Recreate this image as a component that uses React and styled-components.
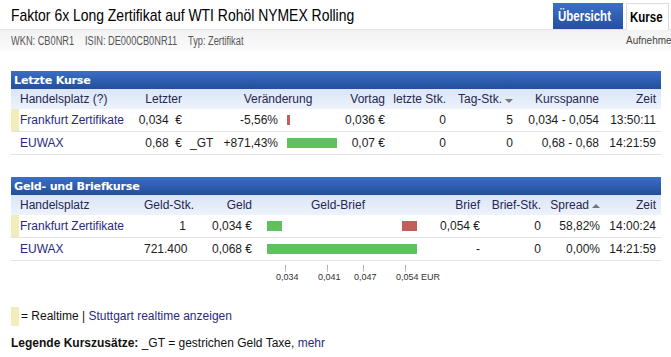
import styled, { createGlobalStyle } from 'styled-components';

const GlobalStyle = createGlobalStyle`
    html, body {
        margin: 0;
        padding: 0;
        background: #fff;
        overflow: hidden;
    }
    body {
        font-family: "Liberation Sans", Arial, sans-serif;
        font-size: 12px;
        color: #1a1a1a;
    }
`;

const colors = {
    link: '#2a2a7c',
    text: '#1c1c1c',
    head: '#262650',
    realtime: '#f2eebb',
    green: '#5ec15e',
    red: '#c35f5a',
    border: '#e3e3e3',
};

// no narrow face installed: squeeze the regular one to Arial Narrow widths
const narrow = (scale = 0.82) => `
    font-family: "Liberation Sans Narrow", "Arial Narrow", "Liberation Sans", sans-serif;
    display: inline-block;
    transform: scaleX(${scale});
    transform-origin: left center;
    white-space: nowrap;
`;

const lastPrices = [
    {
        place: 'Frankfurt Zertifikate',
        realtime: true,
        last: '0,034',
        suffix: '',
        change: '-5,56%',
        bar: { color: colors.red, width: 3 },
        prev: '0,036 €',
        lastQty: '0',
        dayQty: '5',
        range: '0,034 - 0,054',
        time: '13:50:11',
    },
    {
        place: 'EUWAX',
        realtime: false,
        last: '0,68',
        suffix: '_GT',
        change: '+871,43%',
        bar: { color: colors.green, width: 50 },
        prev: '0,07 €',
        lastQty: '0',
        dayQty: '0',
        range: '0,68 - 0,68',
        time: '14:21:59',
    },
];

const bidAsk = [
    {
        place: 'Frankfurt Zertifikate',
        realtime: true,
        bidQty: '1',
        bid: '0,034 €',
        bidBar: 15,
        askBar: 15,
        ask: '0,054 €',
        askQty: '0',
        spread: '58,82%',
        time: '14:00:24',
    },
    {
        place: 'EUWAX',
        realtime: false,
        bidQty: '721.400',
        bid: '0,068 €',
        bidBar: 150,
        askBar: 0,
        ask: '-',
        askQty: '0',
        spread: '0,00%',
        time: '14:21:59',
    },
];

const axis = { min: 0.034, max: 0.054, start: 18, span: 120 };
const axisTicks = [
    { value: 0.034, label: '0,034' },
    { value: 0.041, label: '0,041' },
    { value: 0.047, label: '0,047' },
    { value: 0.054, label: '0,054 EUR' },
];

export default function App() {
    return (
        <Page>
            <GlobalStyle />
            <TopRow>
                <Title>Faktor 6x Long Zertifikat auf WTI Rohöl NYMEX Rolling</Title>
                <Tabs>
                    <Tab $active $w={70} $pad={5}>
                        <TabLabel>Übersicht</TabLabel>
                    </Tab>
                    <Tab $w={43} $pad={3}>
                        <TabLabel>Kurse</TabLabel>
                    </Tab>
                </Tabs>
            </TopRow>
            <InfoBar>
                <InfoItems>
                    <span>WKN: CB0NR1</span>
                    <span>ISIN: DE000CB0NR11</span>
                    <span>Typ: Zertifikat</span>
                </InfoItems>
                <Watch>Aufnehmen</Watch>
            </InfoBar>

            <Section>
                <SectionTitle>Letzte Kurse</SectionTitle>
                <Table>
                    <colgroup>
                        <Col $w={114} />
                        <Col $w={61} />
                        <Col $w={30} />
                        <Col $w={124} />
                        <Col $w={49} />
                        <Col $w={61} />
                        <Col $w={67} />
                        <Col $w={86} />
                        <Col $w={58} />
                    </colgroup>
                    <thead>
                        <tr>
                            <Th $first>Handelsplatz (?)</Th>
                            <Th $align="right">Letzter</Th>
                            <Th />
                            <Th $align="center">Veränderung</Th>
                            <Th $align="right">Vortag</Th>
                            <Th $align="right">letzte Stk.</Th>
                            <Th $align="right">
                                Tag-Stk.<SortArrow $dir="down" />
                            </Th>
                            <Th $align="right">Kursspanne</Th>
                            <Th $align="right" $last>Zeit</Th>
                        </tr>
                    </thead>
                    <tbody>
                        {lastPrices.map((r) => (
                            <tr key={r.place}>
                                <Td $first $realtime={r.realtime}>
                                    <Link>{r.place}</Link>
                                </Td>
                                <Td $align="right">{r.last}&nbsp; €</Td>
                                <Td>{r.suffix}</Td>
                                <Td $flush>
                                    <ChangeCell>
                                        <ChangeValue>{r.change}</ChangeValue>
                                        <Bar $color={r.bar.color} style={{ width: r.bar.width }} />
                                    </ChangeCell>
                                </Td>
                                <Td $align="right">{r.prev}</Td>
                                <Td $align="right">{r.lastQty}</Td>
                                <Td $align="right">{r.dayQty}</Td>
                                <Td $align="right">{r.range}</Td>
                                <Td $align="right" $last>{r.time}</Td>
                            </tr>
                        ))}
                    </tbody>
                </Table>
            </Section>

            <Section $gap={22}>
                <SectionTitle>Geld- und Briefkurse</SectionTitle>
                <Table>
                    <colgroup>
                        <Col $w={129} />
                        <Col $w={50} />
                        <Col $w={66} />
                        <Col $w={164} />
                        <Col $w={64} />
                        <Col $w={61} />
                        <Col $w={59} />
                        <Col $w={57} />
                    </colgroup>
                    <thead>
                        <tr>
                            <Th $first>Handelsplatz</Th>
                            <Th $align="right">Geld-Stk.</Th>
                            <Th $align="right">Geld</Th>
                            <Th $align="center">Geld-Brief</Th>
                            <Th $align="right">Brief</Th>
                            <Th $align="right">Brief-Stk.</Th>
                            <Th $align="right">
                                Spread<SortArrow $dir="up" />
                            </Th>
                            <Th $align="right" $last>Zeit</Th>
                        </tr>
                    </thead>
                    <tbody>
                        {bidAsk.map((r) => (
                            <tr key={r.place}>
                                <Td $first $realtime={r.realtime}>
                                    <Link>{r.place}</Link>
                                </Td>
                                <Td $align="right">{r.bidQty}</Td>
                                <Td $align="right">{r.bid}</Td>
                                <Td $flush>
                                    <SpreadTrack>
                                        <Bar $color={colors.green} style={{ width: r.bidBar }} />
                                        {r.askBar > 0 && (
                                            <Bar $color={colors.red} style={{ width: r.askBar }} />
                                        )}
                                    </SpreadTrack>
                                </Td>
                                <Td $align="right">{r.ask}</Td>
                                <Td $align="right">{r.askQty}</Td>
                                <Td $align="right">{r.spread}</Td>
                                <Td $align="right" $last>{r.time}</Td>
                            </tr>
                        ))}
                    </tbody>
                </Table>
                <AxisRow>
                    {axisTicks.map((t) => (
                        <Tick
                            key={t.label}
                            style={{
                                left:
                                    axis.start +
                                    ((t.value - axis.min) / (axis.max - axis.min)) * axis.span,
                            }}
                        >
                            <TickMark />
                            <TickLabel>{t.label}</TickLabel>
                        </Tick>
                    ))}
                </AxisRow>
            </Section>

            <Legend>
                <LegendLine>
                    <RealtimeBox />
                    <span>
                        = Realtime | <Link>Stuttgart realtime anzeigen</Link>
                    </span>
                </LegendLine>
                <LegendLine $second>
                    <span>
                        <b>Legende Kurszusätze:</b> _GT = gestrichen Geld Taxe, <Link>mehr</Link>
                    </span>
                </LegendLine>
            </Legend>
        </Page>
    );
}

const Page = styled.div`
    width: 671px;
    height: 357px;
    overflow: hidden;
`;

const TopRow = styled.div`
    display: flex;
    align-items: flex-end;
    justify-content: space-between;
    height: 29px;
    padding-left: 11px;
`;

const Title = styled.h1`
    ${narrow()}
    margin: 0 0 3px;
    font-weight: normal;
    font-size: 17px;
    line-height: 20px;
    color: #000;
`;

const Tabs = styled.div`
    display: flex;
    gap: 3px;
    margin-right: 2px;
    align-self: flex-end;
`;

const Tab = styled.div`
    box-sizing: border-box;
    width: ${(p) => p.$w}px;
    height: ${(p) => (p.$active ? '26px' : '27px')};
    margin-bottom: ${(p) => (p.$active ? '0' : '-1px')};
    padding-left: ${(p) => p.$pad}px;
    display: flex;
    align-items: center;
    overflow: hidden;
    font-weight: bold;
    font-size: 14px;
    color: ${(p) => (p.$active ? '#fff' : '#000')};
    background: ${(p) =>
        p.$active ? 'linear-gradient(#3a6fc8, #26509c)' : '#fff'};
    border: ${(p) => (p.$active ? 'none' : '1px solid #dcdcdc')};
    border-bottom: none;
    position: relative;
    z-index: 1;
`;

const TabLabel = styled.span`
    ${narrow()}
`;

const InfoBar = styled.div`
    display: flex;
    justify-content: space-between;
    align-items: center;
    height: 21px;
    border-top: 1px solid #e2e2e2;
    background: linear-gradient(#f2f2f2, #fbfbfb);
    padding-left: 11px;
    white-space: nowrap;
`;

const InfoItems = styled.div`
    ${narrow(0.77)}
    font-size: 12px;
    color: #555;

    span + span {
        margin-left: 14px;
    }
`;

const Watch = styled.span`
    font-size: 10px;
    color: #444;
    width: 45px;
    overflow: visible;
`;

const Section = styled.section`
    margin: ${(p) => p.$gap || 20}px 0 0 11px;
    width: 650px;
`;

const SectionTitle = styled.div`
    height: 18px;
    line-height: 19px;
    padding-left: 3px;
    background: linear-gradient(#3a6fc6, #234e9a);
    color: #fff;
    font-family: "DejaVu Sans", Verdana, sans-serif;
    font-weight: bold;
    font-size: 11.2px;
    letter-spacing: -0.25px;
`;

const Table = styled.table`
    width: 650px;
    table-layout: fixed;
    border-collapse: collapse;
`;

const Col = styled.col`
    width: ${(p) => p.$w}px;
`;

const Th = styled.th`
    height: 20px;
    padding: 0 ${(p) => (p.$last ? 5 : 4)}px 0 ${(p) => (p.$first ? 9 : 4)}px;
    text-align: ${(p) => p.$align || 'left'};
    font-weight: normal;
    color: ${colors.head};
    background: linear-gradient(#dae5f6, #eef3fb);
    white-space: nowrap;
`;

const Td = styled.td`
    height: 22px;
    padding: ${(p) =>
        p.$flush ? '0' : `0 ${p.$last ? 5 : 4}px 0 ${p.$first ? 9 : 4}px`};
    text-align: ${(p) => p.$align || 'left'};
    color: ${colors.text};
    border-bottom: 1px solid ${colors.border};
    white-space: nowrap;
    background: ${(p) =>
        p.$realtime
            ? `linear-gradient(to right, ${colors.realtime} 8px, transparent 8px)`
            : 'none'};
`;

const Link = styled.span`
    color: ${colors.link};
`;

const SortArrow = styled.span`
    display: inline-block;
    margin-left: 3px;
    width: 0;
    height: 0;
    border-left: 4px solid transparent;
    border-right: 4px solid transparent;
    ${(p) =>
        p.$dir === 'down'
            ? 'border-top: 4px solid #777; vertical-align: 0px;'
            : 'border-bottom: 4px solid #777; vertical-align: 1px;'}
`;

const ChangeCell = styled.div`
    display: flex;
    align-items: center;
`;

const ChangeValue = styled.span`
    width: 62px;
    text-align: right;
    margin-right: 9px;
`;

const Bar = styled.span`
    display: block;
    height: 10px;
    background: ${(p) => p.$color};
`;

const SpreadTrack = styled.div`
    display: flex;
    justify-content: space-between;
    align-items: center;
    width: 150px;
    margin-left: 11px;
`;

const AxisRow = styled.div`
    position: relative;
    height: 26px;
    margin-left: 256px;
`;

const Tick = styled.div`
    position: absolute;
    top: 4px;
    display: flex;
    flex-direction: column;
    align-items: flex-start;
`;

const TickMark = styled.span`
    width: 1px;
    height: 7px;
    background: linear-gradient(#8fa9d3, #d8c98a);
`;

const TickLabel = styled.span`
    margin-left: -9px;
    font-size: 9px;
    line-height: 11px;
    color: #333;
    white-space: nowrap;
`;

const Legend = styled.div`
    margin: 20px 0 0 11px;
`;

const LegendLine = styled.div`
    display: flex;
    align-items: center;
    gap: 2px;
    margin-top: ${(p) => (p.$second ? '8px' : '0')};
    line-height: 19px;
    color: #111;
`;

const RealtimeBox = styled.span`
    width: 8px;
    height: 19px;
    background: ${colors.realtime};
`;
